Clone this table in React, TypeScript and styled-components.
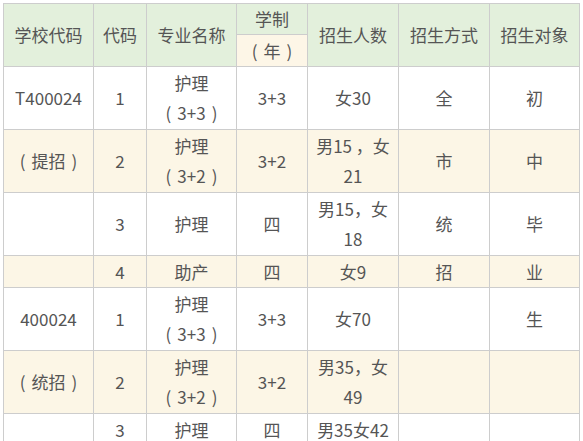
import React from "react";
import styled, { createGlobalStyle } from "styled-components";

const GlobalStyle = createGlobalStyle`
	html, body {
		margin: 0;
		padding: 0;
		background: #ffffff;
		overflow: hidden;
	}
`;

const Page = styled.div`
	padding: 3px 0 0 3px;
	width: 583px;
	height: 441px;
	box-sizing: border-box;
	overflow: hidden;
`;

const Table = styled.table`
	border-collapse: collapse;
	table-layout: fixed;
	width: 576px;
	font-family: "Noto Sans CJK SC", "Noto Sans", sans-serif;
	font-size: 17px;
	color: #555555;
`;

const Row = styled.tr<{ $tall?: boolean; $cream?: boolean }>`
	height: ${({ $tall }) => ($tall ? "63px" : "32px")};
	background: ${({ $cream }) => ($cream ? "#fcf6e6" : "#ffffff")};
`;

const HeadRow = styled.tr<{ $h: number }>`
	height: ${({ $h }) => $h}px;
`;

const Th = styled.th<{ $sub?: boolean }>`
	border: 1px solid #cdcdcd;
	background: ${({ $sub }) => ($sub ? "#fdf6e7" : "#e3f0dc")};
	font-weight: 400;
	padding: 0;
	line-height: 30px;
	text-align: center;
	vertical-align: middle;
`;

const Td = styled.td`
	border: 1px solid #cdcdcd;
	padding: 0;
	line-height: 30px;
	text-align: center;
	vertical-align: middle;
	white-space: nowrap;
`;

// full-width brackets get their side bearing back
const Paren = styled.span<{ $open?: boolean }>`
	display: inline-block;
	margin: ${({ $open }) => ($open ? "0 6px 0 2px" : "0 2px 0 6px")};
`;

const widths = [90, 53, 90, 71, 91, 91, 90];

type Line = string | string[];

type DataRow = {
	tall: boolean;
	cream: boolean;
	cells: Line[];
};

const rows: DataRow[] = [
	{ tall: true, cream: false, cells: ["T400024", "1", ["护理", "（3+3）"], "3+3", "女30", "全", "初"] },
	{ tall: true, cream: true, cells: ["（提招）", "2", ["护理", "（3+2）"], "3+2", ["男15 ，女", "21"], "市", "中"] },
	{ tall: true, cream: false, cells: ["", "3", "护理", "四", ["男15，女", "18"], "统", "毕"] },
	{ tall: false, cream: true, cells: ["", "4", "助产", "四", "女9", "招", "业"] },
	{ tall: true, cream: false, cells: ["400024", "1", ["护理", "（3+3）"], "3+3", "女70", "", "生"] },
	{ tall: true, cream: true, cells: ["（统招）", "2", ["护理", "（3+2）"], "3+2", ["男35，女", "49"], "", ""] },
	{ tall: false, cream: false, cells: ["", "3", "护理", "四", "男35女42", "", ""] },
];

function Text({ line }: { line: string }) {
	const parts = line.split(/([（）])/).filter(Boolean);
	return (
		<>
			{parts.map((p, i) =>
				p === "（" || p === "）" ? (
					<Paren key={i} $open={p === "（"}>
						{p === "（" ? "(" : ")"}
					</Paren>
				) : (
					<React.Fragment key={i}>{p}</React.Fragment>
				)
			)}
		</>
	);
}

function CellText({ value }: { value: Line }) {
	const lines = Array.isArray(value) ? value : [value];
	return (
		<>
			{lines.map((l, i) => (
				<React.Fragment key={i}>
					{i > 0 && <br />}
					<Text line={l} />
				</React.Fragment>
			))}
		</>
	);
}

export default function App() {
	return (
		<>
			<GlobalStyle />
			<Page>
				<Table>
					<colgroup>
						{widths.map((w, i) => (
							<col key={i} style={{ width: w }} />
						))}
					</colgroup>
					<thead>
						<HeadRow $h={31}>
							<Th rowSpan={2}>学校代码</Th>
							<Th rowSpan={2}>代码</Th>
							<Th rowSpan={2}>专业名称</Th>
							<Th>学制</Th>
							<Th rowSpan={2}>招生人数</Th>
							<Th rowSpan={2}>招生方式</Th>
							<Th rowSpan={2}>招生对象</Th>
						</HeadRow>
						<HeadRow $h={32}>
							<Th $sub>
								<Text line="（年）" />
							</Th>
						</HeadRow>
					</thead>
					<tbody>
						{rows.map((r, i) => (
							<Row key={i} $tall={r.tall} $cream={r.cream}>
								{r.cells.map((c, j) => (
									<Td key={j}>
										<CellText value={c} />
									</Td>
								))}
							</Row>
						))}
					</tbody>
				</Table>
			</Page>
		</>
	);
}
